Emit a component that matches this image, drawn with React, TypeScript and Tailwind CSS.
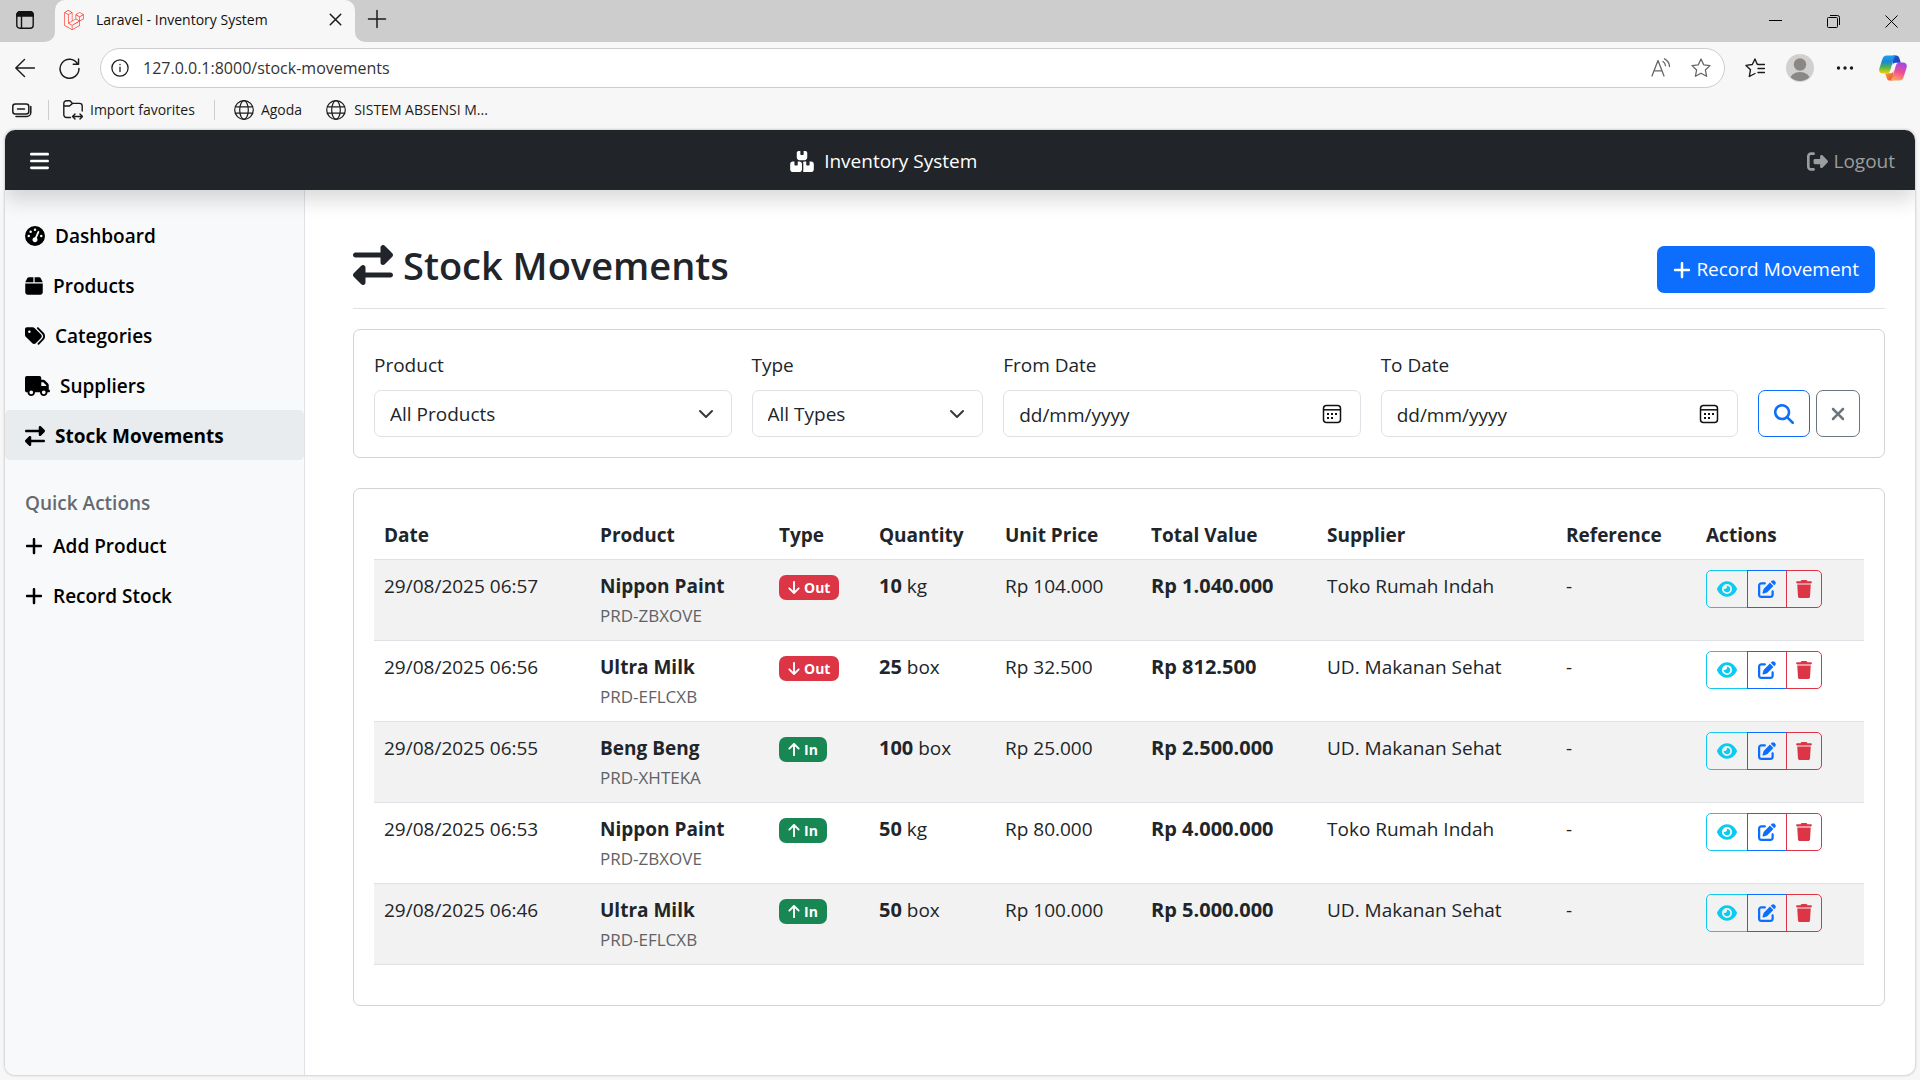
import type { ReactNode } from "react";
import {
  FaArrowDown,
  FaArrowUp,
  FaBars,
  FaBox,
  FaBoxesStacked,
  FaEye,
  FaGaugeHigh,
  FaMagnifyingGlass,
  FaPenToSquare,
  FaPlus,
  FaRightFromBracket,
  FaRightLeft,
  FaTags,
  FaTrash,
  FaTruck,
  FaXmark,
} from "react-icons/fa6";
import { SiLaravel } from "react-icons/si";

type Movement = {
  date: string;
  product: string;
  sku: string;
  type: "In" | "Out";
  qty: string;
  unit: string;
  price: string;
  total: string;
  supplier: string;
};

const movements: Movement[] = [
  { date: "29/08/2025 06:57", product: "Nippon Paint", sku: "PRD-ZBXOVE", type: "Out", qty: "10", unit: "kg", price: "Rp 104.000", total: "Rp 1.040.000", supplier: "Toko Rumah Indah" },
  { date: "29/08/2025 06:56", product: "Ultra Milk", sku: "PRD-EFLCXB", type: "Out", qty: "25", unit: "box", price: "Rp 32.500", total: "Rp 812.500", supplier: "UD. Makanan Sehat" },
  { date: "29/08/2025 06:55", product: "Beng Beng", sku: "PRD-XHTEKA", type: "In", qty: "100", unit: "box", price: "Rp 25.000", total: "Rp 2.500.000", supplier: "UD. Makanan Sehat" },
  { date: "29/08/2025 06:53", product: "Nippon Paint", sku: "PRD-ZBXOVE", type: "In", qty: "50", unit: "kg", price: "Rp 80.000", total: "Rp 4.000.000", supplier: "Toko Rumah Indah" },
  { date: "29/08/2025 06:46", product: "Ultra Milk", sku: "PRD-EFLCXB", type: "In", qty: "50", unit: "box", price: "Rp 100.000", total: "Rp 5.000.000", supplier: "UD. Makanan Sehat" },
];

function Line({ size = 20, width = 1.3, children }: { size?: number; width?: number; children: ReactNode }) {
  return (
    <svg
      width={size}
      height={size}
      viewBox="0 0 20 20"
      fill="none"
      stroke="currentColor"
      strokeWidth={width}
      strokeLinecap="round"
      strokeLinejoin="round"
      className="shrink-0"
      aria-hidden="true"
    >
      {children}
    </svg>
  );
}

function Globe() {
  return (
    <Line width={1.2}>
      <circle cx="10" cy="10" r="9.3" />
      <ellipse cx="10" cy="10" rx="4.3" ry="9.3" />
      <path d="M1.4 6.8h17.2M1.4 13.2h17.2" />
    </Line>
  );
}

function CopilotLogo() {
  return (
    <svg width="28" height="26" viewBox="0 0 28 26" aria-hidden="true">
      <defs>
        <linearGradient id="cpLeft" x1="0" y1="0" x2="0" y2="1">
          <stop offset="0" stopColor="#1aa0f2" />
          <stop offset="0.35" stopColor="#1b86d8" />
          <stop offset="0.65" stopColor="#52b44b" />
          <stop offset="1" stopColor="#f6cf08" />
        </linearGradient>
        <linearGradient id="cpRight" x1="0.6" y1="0" x2="0.3" y2="1">
          <stop offset="0" stopColor="#a347e6" />
          <stop offset="0.5" stopColor="#ee5094" />
          <stop offset="1" stopColor="#fda85c" />
        </linearGradient>
        <linearGradient id="cpTop" x1="0" y1="0" x2="1" y2="1">
          <stop offset="0" stopColor="#2355d8" />
          <stop offset="1" stopColor="#1b3fb6" />
        </linearGradient>
        <linearGradient id="cpBottom" x1="0" y1="0" x2="1" y2="1">
          <stop offset="0" stopColor="#fbb023" />
          <stop offset="1" stopColor="#e9483a" />
        </linearGradient>
      </defs>
      <path d="M14 .5h3.200c1.700 0 2.600 1 3.100 2.600l1.500 4.700h-5.200c-1.500 0-2.500.8-3 2.300z" fill="url(#cpTop)" />
      <path d="M14 25.500h-3.200c-1.700 0-2.600-1-3.100-2.600l-1.500-4.700h5.200c1.500 0 2.500-.8 3-2.300z" fill="url(#cpBottom)" />
      <path d="M7.800.5h9.400c-1.200.4-1.900 1.300-2.400 2.900l-3.500 11.500c-.7 2.300-1.700 3.600-3.800 3.600H4c-3.200 0-4.400-2.300-3.500-5.600L3.300 4.300C4 1.800 5.400.5 7.800.5z" fill="url(#cpLeft)" />
      <path d="M20.200 25.500h-9.400c1.200-.4 1.900-1.300 2.400-2.900l3.500-11.500c.7-2.300 1.700-3.600 3.800-3.600H24c3.200 0 4.400 2.300 3.500 5.600l-2.800 8.600c-.7 2.500-2.100 3.800-4.500 3.800z" fill="url(#cpRight)" />
    </svg>
  );
}

function BrowserChrome() {
  return (
    <div className="text-[#1b1b1b]">
      <div className="flex h-[43px] border-b border-[#f7f7f7] bg-[#f7f7f7]">
        <button aria-label="Tab actions" className="flex w-[55px] items-center rounded-br-[10px] bg-[#cdcdcd] pl-4 pb-0.5">
          <svg width="18" height="18" viewBox="0 0 18 18" fill="none" stroke="#111" strokeWidth="1.400" aria-hidden="true">
            <rect x=".8" y=".8" width="16.400" height="16.400" rx="3" />
            <path d="M1 3.800A3 3 0 0 1 3.800 1h10.400A3 3 0 0 1 17 3.800V5H1z" fill="#111" />
            <path d="M5.500 5v12" />
          </svg>
        </button>
        <div className="w-[300px] bg-[#cdcdcd]">
          <div className="flex h-full items-center rounded-t-[10px] bg-[#f7f7f7] pr-[10px] pb-[3px] pl-[9px]">
            <SiLaravel className="size-5 text-[#ff2d20]" />
            <span className="ml-3 flex-1 text-[14px] text-[#111]">Laravel - Inventory System</span>
            <button aria-label="Close tab" className="p-0.5">
              <Line size={15} width={2}>
                <path d="M3 3l14 14M17 3L3 17" />
              </Line>
            </button>
          </div>
        </div>
        <div className="flex flex-1 items-center rounded-bl-[10px] bg-[#cdcdcd] pb-1 pl-3">
          <button aria-label="New tab">
            <Line width={1.5}>
              <path d="M10 1.500v17M1.500 10h17" />
            </Line>
          </button>
          <div className="ml-auto flex items-center gap-[45px] pt-1 pr-[22px] text-black">
            <button aria-label="Minimize">
              <svg width="13" height="13" viewBox="0 0 13 13" stroke="currentColor" aria-hidden="true">
                <path d="M0 5.500h13" />
              </svg>
            </button>
            <button aria-label="Restore">
              <svg width="13" height="13" viewBox="0 0 13 13" fill="none" stroke="currentColor" aria-hidden="true">
                <rect x=".5" y="2.500" width="10" height="10" rx="1" />
                <path d="M3 .5h7.500a2 2 0 0 1 2 2V10" />
              </svg>
            </button>
            <button aria-label="Close window">
              <svg width="13" height="13" viewBox="0 0 13 13" stroke="currentColor" aria-hidden="true">
                <path d="M.5.5l12 12M12.500.5l-12 12" />
              </svg>
            </button>
          </div>
        </div>
      </div>

      <div className="flex h-[50px] items-center pr-[13px] pl-[15px]">
        <button aria-label="Back" className="w-[44px]">
          <Line width={1.4}>
            <path d="M19.500 10H.8M9.500 1.500L.8 10l8.700 8.500" />
          </Line>
        </button>
        <button aria-label="Refresh" className="mr-5">
          <Line size={21} width={1.4}>
            <path d="M17.700 5.600A9 9 0 1 0 19 10M18.600 1v5h-5" />
          </Line>
        </button>
        <div className="flex h-10 flex-1 items-center rounded-full border border-[#cdcdcd] bg-white pr-[13px] pl-[10px]">
          <Line size={18} width={1.4}>
            <circle cx="10" cy="10" r="9" />
            <path d="M10 9v5M10 6v.3" />
          </Line>
          <input
            aria-label="Address"
            defaultValue="127.0.0.1:8000/stock-movements"
            className="ml-[14px] min-w-0 flex-1 bg-transparent text-[16px] text-[#333] outline-none"
          />
          <div className="flex items-center gap-5 text-[#666]">
            <button aria-label="Read aloud">
              <Line width={1.3}>
                <path d="M1 18L7 2.500 13 18M3 12.800h8M12 3.500c1.500 1 2.300 2.400 2.500 4.200M13.500.8c3 1.500 4.800 4.300 5 7.700" />
              </Line>
            </button>
            <button aria-label="Add to favorites">
              <Line width={1.3}>
                <path d="M10 1l2.700 5.800 6.300.8-4.600 4.400 1.200 6.300L10 15.200l-5.600 3.100L5.600 12 1 7.600l6.300-.8z" />
              </Line>
            </button>
          </div>
        </div>
        <button aria-label="Favorites" className="ml-5">
          <Line width={1.4}>
            <path d="M12.800 6.200h-.6L10 1 7.300 6.500 1 7.400l4.500 4.300-1.200 6.800L10 15.500M13 6.500h6.500M13 10.500h6.500M13 14.500h6.500" />
          </Line>
        </button>
        <button aria-label="Profile" className="ml-[21px]">
          <svg width="28" height="28" viewBox="0 0 28 28" aria-hidden="true">
            <defs>
              <clipPath id="avatarDisc">
                <circle cx="14" cy="14" r="13" />
              </clipPath>
            </defs>
            <circle cx="14" cy="14" r="14" fill="#d2d0ce" />
            <circle cx="14" cy="10.500" r="6.200" fill="#8a8886" />
            <ellipse cx="14" cy="25.500" rx="10" ry="7.500" fill="#8a8886" clipPath="url(#avatarDisc)" />
          </svg>
        </button>
        <button aria-label="Settings and more" className="ml-[22px]">
          <svg width="18" height="6" viewBox="0 0 18 6" fill="currentColor" aria-hidden="true">
            <circle cx="2.500" cy="3" r="1.700" />
            <circle cx="9" cy="3" r="1.700" />
            <circle cx="15.500" cy="3" r="1.700" />
          </svg>
        </button>
        <button aria-label="Copilot" className="ml-[25px]">
          <CopilotLogo />
        </button>
      </div>

      <div className="flex h-[37px] items-center pb-1 pl-3 text-[14px]">
        <button aria-label="Workspaces">
          <Line width={1.5}>
            <rect x=".8" y="4" width="16" height="10" rx="2.500" />
            <path d="M5.500 9h7M18.800 6.500v6a4 4 0 0 1-4 4H4" />
          </Line>
        </button>
        <span className="mr-[14px] ml-4 h-5 w-px bg-[#cdcdcd]" />
        <a href="#import" className="flex items-center gap-[7px]">
          <Line size={20} width={1.4}>
            <path d="M7.500 17.500H3.500A2.700 2.700 0 0 1 .8 14.800V3.500A2.700 2.700 0 0 1 3.500.8H7l2.500 2.600h7a2.700 2.700 0 0 1 2.700 2.700V11M1 6h5.500l3-2.600M10 16.500h9M12 14l-2.500 2.500L12 19M17 14l2.500 2.500L17 19" />
          </Line>
          Import favorites
        </a>
        <span className="mx-[19px] h-5 w-px bg-[#cdcdcd]" />
        <a href="#agoda" className="flex items-center gap-[7px]">
          <Globe />
          Agoda
        </a>
        <a href="#absensi" className="ml-6 flex items-center gap-2">
          <Globe />
          SISTEM ABSENSI M...
        </a>
      </div>
    </div>
  );
}

function NavItem({ icon, label, active }: { icon: ReactNode; label: string; active?: boolean }) {
  return (
    <a
      href={"#" + label.toLowerCase().replace(" ", "-")}
      aria-current={active ? "page" : undefined}
      className={
        active
          ? "flex h-[50px] items-center gap-[10px] rounded-[5px] bg-[#e9ecef] px-5 pt-0.5 font-bold text-black"
          : "flex h-[50px] items-center gap-[10px] rounded-[5px] px-5 pt-0.5 font-semibold text-black"
      }
    >
      {icon}
      {label}
    </a>
  );
}

function Sidebar() {
  return (
    <nav aria-label="Main" className="w-[300px] shrink-0 border-r border-[#dee2e6] bg-[#f8f9fa] pt-5">
      <NavItem icon={<FaGaugeHigh className="h-5 w-5 shrink-0" />} label="Dashboard" />
      <NavItem icon={<FaBox className="h-5 w-[18px] shrink-0" />} label="Products" />
      <NavItem icon={<FaTags className="h-5 w-5 shrink-0" />} label="Categories" />
      <NavItem icon={<FaTruck className="h-5 w-[25px] shrink-0" />} label="Suppliers" />
      <NavItem icon={<FaRightLeft className="h-5 w-5 shrink-0" />} label="Stock Movements" active />
      <h2 className="mt-[29px] mb-[3px] px-5 leading-7 font-semibold text-[#666a6e]">Quick Actions</h2>
      <NavItem icon={<FaPlus className="h-5 w-[18px] shrink-0" />} label="Add Product" />
      <NavItem icon={<FaPlus className="h-5 w-[18px] shrink-0" />} label="Record Stock" />
    </nav>
  );
}

const field = "h-[47px] w-full rounded-[7px] border border-[#dee2e6] bg-white pl-[15px] text-[#212529] outline-none";

function SelectField({ id, label, option, span }: { id: string; label: string; option: string; span: string }) {
  return (
    <div className={span}>
      <label htmlFor={id} className="mb-[9px] block leading-8">{label}</label>
      <div className="relative">
        <select id={id} className={field + " appearance-none pt-0.5"}>
          <option>{option}</option>
        </select>
        <svg
          width="16"
          height="16"
          viewBox="0 0 16 16"
          fill="none"
          stroke="#343a40"
          strokeWidth="2"
          strokeLinecap="round"
          strokeLinejoin="round"
          className="pointer-events-none absolute top-4 right-[18px]"
          aria-hidden="true"
        >
          <path d="m2 5 6 6 6-6" />
        </svg>
      </div>
    </div>
  );
}

function DateField({ id, label }: { id: string; label: string }) {
  return (
    <div className="col-span-3">
      <label htmlFor={id} className="mb-[9px] block leading-8">{label}</label>
      <div className="relative">
        <input id={id} type="text" placeholder="dd/mm/yyyy" className={field + " pt-0.5 placeholder:text-[#212529]"} />
        <button aria-label={"Pick " + label} className="absolute top-[14px] right-[19px]">
          <svg width="20" height="20" viewBox="0 0 20 20" fill="none" stroke="#111" strokeWidth="1.500" aria-hidden="true">
            <rect x="1.500" y="1.500" width="17" height="17" rx="3" />
            <path d="M1.500 5.800h17" />
            <g fill="#111" stroke="none">
              <rect x="5" y="9" width="2" height="2" />
              <rect x="9" y="9" width="2" height="2" />
              <rect x="13" y="9" width="2" height="2" />
              <rect x="5" y="13" width="2" height="2" />
              <rect x="9" y="13" width="2" height="2" />
            </g>
          </svg>
        </button>
      </div>
    </div>
  );
}

function TypeBadge({ type }: { type: "In" | "Out" }) {
  const isOut = type === "Out";
  return (
    <span
      className={
        isOut
          ? "mt-[5px] inline-flex h-[25px] items-center gap-1 rounded-[7px] bg-[#dc3545] px-[9px] text-[14px] font-bold text-white"
          : "mt-[5px] inline-flex h-[25px] items-center gap-1 rounded-[7px] bg-[#198754] px-[9px] text-[14px] font-bold text-white"
      }
    >
      {isOut ? <FaArrowDown className="h-[15px] w-3" /> : <FaArrowUp className="h-[15px] w-3" />}
      {type}
    </span>
  );
}

function RowActions() {
  return (
    <div className="mt-0.5 inline-flex h-[38px]">
      <button aria-label="View" className="rounded-l-[5px] border border-[#0dcaf0] px-[10px] text-[#0dcaf0]">
        <FaEye className="h-[18px] w-5" />
      </button>
      <button aria-label="Edit" className="-ml-px border border-[#0d6efd] px-[10px] text-[#0d6efd]">
        <FaPenToSquare className="h-[18px] w-[18px]" />
      </button>
      <button aria-label="Delete" className="-ml-px rounded-r-[5px] border border-[#dc3545] px-[9px] text-[#dc3545]">
        <FaTrash className="h-[18px] w-4" />
      </button>
    </div>
  );
}

function MovementsTable() {
  const th = "px-[10px] pt-[10px] pb-[9px] font-bold";
  const td = "px-[10px] pt-[11px] pb-[9px]";
  return (
    <table className="w-full table-fixed text-left align-top leading-[30px]">
      <colgroup>
        <col className="w-[216px]" />
        <col className="w-[179px]" />
        <col className="w-[100px]" />
        <col className="w-[126px]" />
        <col className="w-[146px]" />
        <col className="w-[176px]" />
        <col className="w-[239px]" />
        <col className="w-[140px]" />
        <col className="w-[168px]" />
      </colgroup>
      <thead>
        <tr className="border-b border-[#dee2e6]">
          <th className={th}>Date</th>
          <th className={th}>Product</th>
          <th className={th}>Type</th>
          <th className={th}>Quantity</th>
          <th className={th}>Unit Price</th>
          <th className={th}>Total Value</th>
          <th className={th}>Supplier</th>
          <th className={th}>Reference</th>
          <th className={th}>Actions</th>
        </tr>
      </thead>
      <tbody>
        {movements.map((m) => (
          <tr key={m.date} className="border-b border-[#dee2e6] align-top odd:bg-[#f2f2f2]">
            <td className={td}>{m.date}</td>
            <td className={td}>
              <strong className="block font-bold">{m.product}</strong>
              <small className="block text-[17px] text-[#5f6367]">{m.sku}</small>
            </td>
            <td className="px-[10px]">
              <div className="flex pt-[10px]">
                <TypeBadge type={m.type} />
              </div>
            </td>
            <td className={td}>
              <strong className="text-[20px] font-bold">{m.qty}</strong> {m.unit}
            </td>
            <td className={td}>{m.price}</td>
            <td className={td}>
              <strong className="text-[20px] font-bold">{m.total}</strong>
            </td>
            <td className={td}>{m.supplier}</td>
            <td className={td}>-</td>
            <td className="px-[10px] pt-2">
              <RowActions />
            </td>
          </tr>
        ))}
      </tbody>
    </table>
  );
}

export default function App() {
  return (
    <div className="flex min-h-screen flex-col bg-[#f7f7f7] font-['Open_Sans','Noto_Sans',sans-serif]">
      <BrowserChrome />
      <div className="mx-[5px] mb-[5px] flex flex-1 flex-col overflow-hidden rounded-[10px] bg-white text-[19px] text-[#212529] shadow-[0_0_2px_1px_rgba(0,0,0,0.15)]">
        <header className="relative z-10 flex h-[60px] items-center bg-[#212529] px-5 pt-0.5 text-white shadow-[0_10px_20px_rgba(0,0,0,0.15)]">
          <button aria-label="Toggle sidebar" className="px-[5px]">
            <FaBars className="h-[22px] w-[19px]" />
          </button>
          <div className="flex flex-1 justify-center pr-[94px]">
            <a href="#home" className="flex items-center gap-[10px]">
              <FaBoxesStacked className="h-[21px] w-6" />
              Inventory System
            </a>
          </div>
          <button className="flex items-center gap-[5px] text-[#9b9d9e]">
            <FaRightFromBracket className="h-[21px] w-[21px]" />
            Logout
          </button>
        </header>

        <div className="flex flex-1">
          <Sidebar />
          <main className="min-w-0 flex-1 pt-[49px] pr-[30px] pl-12">
            <div className="flex items-start justify-between border-b border-[#dee2e6] pr-[10px] pb-[15px]">
              <h1 className="flex items-center gap-[10px] text-[38px] leading-[52px] font-semibold">
                <FaRightLeft className="h-10 w-10" />
                Stock Movements
              </h1>
              <button className="mt-[7px] flex h-[47px] items-center gap-[5px] rounded-[7px] bg-[#0d6efd] px-4 text-white">
                <FaPlus className="h-5 w-[18px]" />
                Record Movement
              </button>
            </div>

            <form
              className="mt-5 grid grid-cols-12 items-end gap-5 rounded-[7px] border border-[#d3d3d4] px-5 pt-[19px] pb-5"
              onSubmit={(e) => e.preventDefault()}
            >
              <SelectField id="product" label="Product" option="All Products" span="col-span-3" />
              <SelectField id="type" label="Type" option="All Types" span="col-span-2" />
              <DateField id="from" label="From Date" />
              <DateField id="to" label="To Date" />
              <div className="flex gap-[6px]">
                <button aria-label="Search" className="flex h-[47px] items-center rounded-[7px] border border-[#0d6efd] px-[15px] text-[#0d6efd]">
                  <FaMagnifyingGlass className="h-5 w-5" />
                </button>
                <button type="reset" aria-label="Clear filters" className="flex h-[47px] items-center rounded-[7px] border border-[#6c757d] px-[13px] text-[#6c757d]">
                  <FaXmark className="h-5 w-4" />
                </button>
              </div>
            </form>

            <section className="mt-[30px] mb-10 rounded-[7px] border border-[#d3d3d4] px-5 pt-[21px] pb-10">
              <MovementsTable />
            </section>
          </main>
        </div>
      </div>
    </div>
  );
}
